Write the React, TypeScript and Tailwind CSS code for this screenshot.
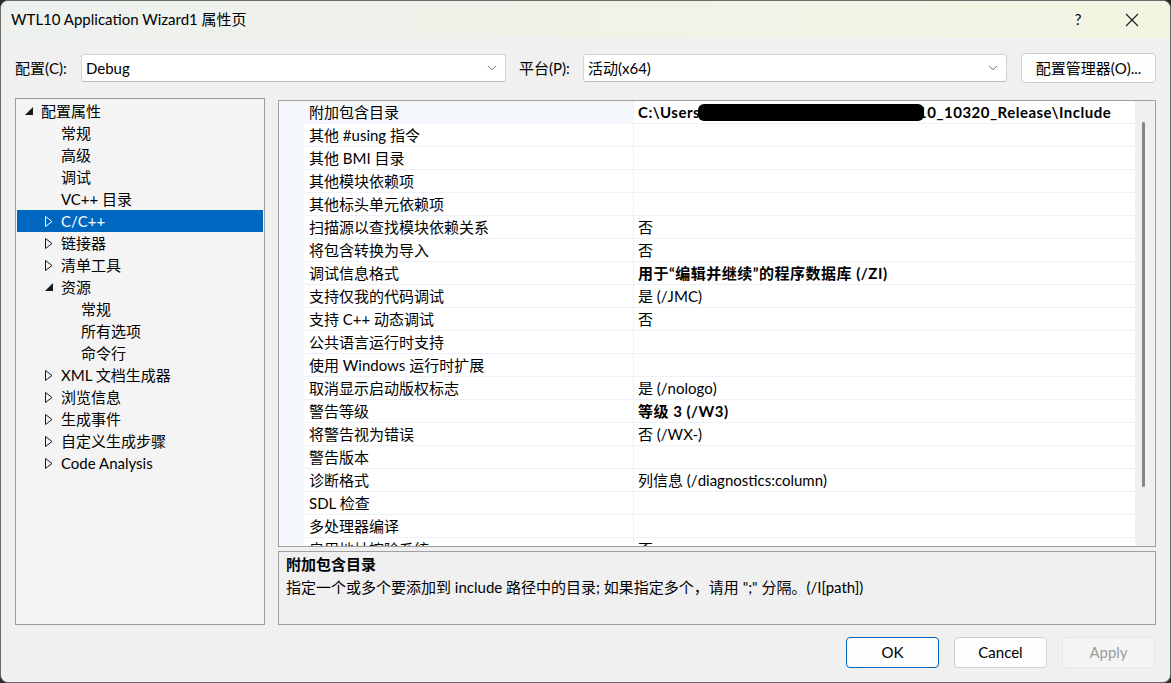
import React from "react";

const FONT = '"Segoe UI", Lato, "Noto Sans CJK SC", sans-serif';

type Tree = { label: string; level: 0 | 1 | 2; state: "none" | "collapsed" | "expanded"; selected?: boolean };

const treeItems: Tree[] = [
  { label: "配置属性", level: 0, state: "expanded" },
  { label: "常规", level: 1, state: "none" },
  { label: "高级", level: 1, state: "none" },
  { label: "调试", level: 1, state: "none" },
  { label: "VC++ 目录", level: 1, state: "none" },
  { label: "C/C++", level: 1, state: "collapsed", selected: true },
  { label: "链接器", level: 1, state: "collapsed" },
  { label: "清单工具", level: 1, state: "collapsed" },
  { label: "资源", level: 1, state: "expanded" },
  { label: "常规", level: 2, state: "none" },
  { label: "所有选项", level: 2, state: "none" },
  { label: "命令行", level: 2, state: "none" },
  { label: "XML 文档生成器", level: 1, state: "collapsed" },
  { label: "浏览信息", level: 1, state: "collapsed" },
  { label: "生成事件", level: 1, state: "collapsed" },
  { label: "自定义生成步骤", level: 1, state: "collapsed" },
  { label: "Code Analysis", level: 1, state: "collapsed" },
];

const padByLevel: Record<number, string> = { 0: "pl-[8px]", 1: "pl-[28px]", 2: "pl-[48px]" };

type Prop = { name: string; value?: string; bold?: boolean; redacted?: boolean; active?: boolean };

const props: Prop[] = [
  { name: "附加包含目录", redacted: true, bold: true, active: true },
  { name: "其他 #using 指令" },
  { name: "其他 BMI 目录" },
  { name: "其他模块依赖项" },
  { name: "其他标头单元依赖项" },
  { name: "扫描源以查找模块依赖关系", value: "否" },
  { name: "将包含转换为导入", value: "否" },
  { name: "调试信息格式", value: "用于“编辑并继续”的程序数据库 (/ZI)", bold: true },
  { name: "支持仅我的代码调试", value: "是 (/JMC)" },
  { name: "支持 C++ 动态调试", value: "否" },
  { name: "公共语言运行时支持" },
  { name: "使用 Windows 运行时扩展" },
  { name: "取消显示启动版权标志", value: "是 (/nologo)" },
  { name: "警告等级", value: "等级 3 (/W3)", bold: true },
  { name: "将警告视为错误", value: "否 (/WX-)" },
  { name: "警告版本" },
  { name: "诊断格式", value: "列信息 (/diagnostics:column)" },
  { name: "SDL 检查" },
  { name: "多处理器编译" },
  { name: "启用地址擦除系统", value: "否" },
];

function Chevron() {
  return (
    <svg width="10" height="6" viewBox="0 0 10 6" className="shrink-0">
      <path d="M1 0.8 L5 4.8 L9 0.8" fill="none" stroke="#6b6b6b" strokeWidth="1" />
    </svg>
  );
}

function Combo({ value, className }: { value: string; className: string }) {
  return (
    <div
      className={`${className} h-[28px] flex items-center justify-between bg-white border border-[#d4d4d4] border-b-[#bdbdbd] rounded-[3px] pl-[4px] pr-[8px] text-[15px] text-black`}
    >
      <span>{value}</span>
      <Chevron />
    </div>
  );
}

function Tri({ state, selected }: { state: Tree["state"]; selected?: boolean }) {
  const c = selected ? "#ffffff" : "#1a1a1a";
  if (state === "collapsed")
    return (
      <svg width="8" height="11" viewBox="0 0 8 11">
        <polygon points="0.5,0.5 7,5.5 0.5,10.5" fill="none" stroke={c} strokeWidth="1" />
      </svg>
    );
  if (state === "expanded")
    return (
      <svg width="8" height="8" viewBox="0 0 8 8">
        <polygon points="8,0 8,8 0,8" fill={c} />
      </svg>
    );
  return null;
}

function Btn({ label, variant }: { label: string; variant: "default" | "normal" | "disabled" }) {
  const cls =
    variant === "default"
      ? "bg-[#fdfdfd] border-[#0067c0] text-black"
      : variant === "normal"
      ? "bg-[#fdfdfd] border-[#d0d0d0] text-black"
      : "bg-[#f5f5f5] border-[#e6e6e6] text-[#9d9d9d]";
  return (
    <div className={`w-[93px] h-[31px] flex items-center justify-center border rounded-[4px] text-[15px] ${cls}`}>
      {label}
    </div>
  );
}

export default function App() {
  return (
    <div className="w-[1171px] h-[683px] bg-[#2a2a2a]" style={{ fontFamily: FONT }}>
      <div className="w-full h-full flex flex-col bg-[#f0f0f0] border border-[#6a6a6a] rounded-[8px] overflow-hidden">
        {/* Title bar */}
        <div className="h-[37px] shrink-0 flex items-center bg-gradient-to-r from-[#edf1ee] to-[#f4f4e2] pl-[10px] pr-[20px] text-[15px] text-black">
          <span className="flex-1">WTL10 Application Wizard1 属性页</span>
          <span className="w-[20px] text-center mr-[37px] text-[15px]">?</span>
          <svg width="14" height="14" viewBox="0 0 14 14" className="mr-[11px]">
            <path d="M1 1 L13 13 M13 1 L1 13" stroke="#1a1a1a" strokeWidth="1.1" />
          </svg>
        </div>

        {/* Body */}
        <div className="flex-1 flex flex-col px-[14px]">
          {/* config row */}
          <div className="mt-[15px] h-[30px] flex items-center text-[15px] text-black">
            <span className="w-[66px]">配置(C):</span>
            <Combo value="Debug" className="w-[425px]" />
            <span className="w-[64px] ml-[13px]">平台(P):</span>
            <Combo value="活动(x64)" className="w-[424px]" />
            <div className="ml-[14px] w-[135px] h-[30px] flex items-center justify-center bg-[#fdfdfd] border border-[#d0d0d0] rounded-[4px]">
              配置管理器(O)...
            </div>
          </div>

          {/* main area */}
          <div className="mt-[15px] h-[527px] flex gap-[13px]">
            {/* tree */}
            <div className="w-[250px] shrink-0 bg-[#f4f4f4] border border-[#999999] pt-[1px] px-[1px] text-[15px]">
              {treeItems.map((t, i) => (
                <div
                  key={i}
                  className={`h-[22px] flex items-center ${padByLevel[t.level]} ${
                    t.selected ? "bg-[#0067c0] text-white" : "text-black"
                  }`}
                >
                  <span className="w-[16px] h-[22px] shrink-0 flex items-center">
                    <Tri state={t.state} selected={t.selected} />
                  </span>
                  <span className="leading-[22px] whitespace-nowrap">{t.label}</span>
                </div>
              ))}
            </div>

            {/* right column */}
            <div className="flex-1 flex flex-col gap-[4px]">
              {/* grid */}
              <div className="h-[447px] flex border border-[#a0a0a0] bg-white overflow-hidden mt-[2px]">
                <div className="w-[25px] shrink-0 bg-[#f4f8fc]" />
                <div className="flex-1 flex flex-col overflow-hidden">
                  {props.map((p, i) => (
                    <div key={i} className="h-[23px] shrink-0 flex border-b border-[#eef2f8] text-[15px] text-black">
                      <div
                        className={`w-[330px] shrink-0 border-r border-[#eef2f8] pl-[5px] leading-[23px] whitespace-nowrap ${
                          p.active ? "bg-[#f4f8fc]" : ""
                        }`}
                      >
                        {p.name}
                      </div>
                      <div
                        className={`flex-1 pl-[4px] leading-[23px] whitespace-nowrap ${
                          p.bold ? "font-bold tracking-[0.5px]" : ""
                        }`}
                      >
                        {p.redacted ? (
                          <span className="inline-flex items-center">
                            <span>C:\Users</span>
                            <span className="inline-block w-[226px] h-[17px] bg-black rounded-[6px] -ml-[2px] -mr-[6px]" />
                            <span>10_10320_Release\Include</span>
                          </span>
                        ) : (
                          p.value
                        )}
                      </div>
                    </div>
                  ))}
                </div>
                <div className="w-[20px] shrink-0 bg-[#f0f0f0] pt-[21px] pl-[7px]">
                  <div className="w-[3px] h-[365px] bg-[#858585] rounded-full" />
                </div>
              </div>

              {/* description */}
              <div className="h-[74px] border border-[#a0a0a0] bg-[#f0f0f0] px-[7px] pt-[1px] text-[15px] text-black">
                <div className="leading-[23px] font-bold">附加包含目录</div>
                <div className="leading-[23px]">
                  指定一个或多个要添加到 include 路径中的目录; 如果指定多个，请用 ";" 分隔。(/I[path])
                </div>
              </div>
            </div>
          </div>

          {/* buttons */}
          <div className="mt-[12px] flex justify-end gap-[15px] pr-[1px]">
            <Btn label="OK" variant="default" />
            <Btn label="Cancel" variant="normal" />
            <Btn label="Apply" variant="disabled" />
          </div>
        </div>
      </div>
    </div>
  );
}
